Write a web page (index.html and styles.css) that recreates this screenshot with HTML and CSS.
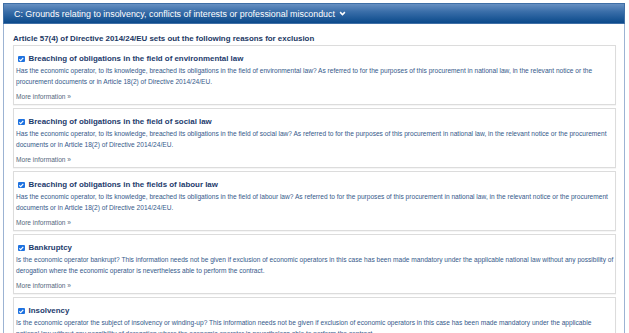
FILE: index.html
```html
<!DOCTYPE html>
<html lang="en">
<head>
  <meta charset="UTF-8" />
  <title>Exclusion grounds</title>
  <link rel="stylesheet" href="styles.css">
</head>
<body>
  <section class="panel">
    <div class="panel-head">
      C: Grounds relating to insolvency, conflicts of interests or professional misconduct
      <svg class="chev" viewBox="0 0 10 8" width="7" height="6"><path d="M0.8 2.2 L2.4 0.6 L5 3.2 L7.6 0.6 L9.2 2.2 L5 6.4 Z" fill="#fff"/></svg>
    </div>

    <div class="panel-body">
      <h3 class="intro">Article 57(4) of Directive 2014/24/EU sets out the following reasons for exclusion</h3>

      <!-- one card per ground -->
      <div class="ground">
        <div class="ground-title"><span class="check"><svg viewBox="0 0 8 8"><path d="M1.6 4.1 L3.3 5.8 L6.5 2.2" fill="none" stroke="#fff" stroke-width="1.4"/></svg></span>Breaching of obligations in the field of environmental law</div>
        <p class="ground-desc">Has the economic operator, to its knowledge, breached its obligations in the field of environmental law? As referred to for the purposes of this procurement in national law, in the relevant notice or the procurement documents or in Article 18(2) of Directive 2014/24/EU.</p>
        <a class="more" href="#">More information »</a>
      </div>

      <div class="ground">
        <div class="ground-title"><span class="check"><svg viewBox="0 0 8 8"><path d="M1.6 4.1 L3.3 5.8 L6.5 2.2" fill="none" stroke="#fff" stroke-width="1.4"/></svg></span>Breaching of obligations in the field of social law</div>
        <p class="ground-desc">Has the economic operator, to its knowledge, breached its obligations in the field of social law? As referred to for the purposes of this procurement in national law, in the relevant notice or the procurement documents or in Article 18(2) of Directive 2014/24/EU.</p>
        <a class="more" href="#">More information »</a>
      </div>

      <div class="ground">
        <div class="ground-title"><span class="check"><svg viewBox="0 0 8 8"><path d="M1.6 4.1 L3.3 5.8 L6.5 2.2" fill="none" stroke="#fff" stroke-width="1.4"/></svg></span>Breaching of obligations in the fields of labour law</div>
        <p class="ground-desc">Has the economic operator, to its knowledge, breached its obligations in the field of labour law? As referred to for the purposes of this procurement in national law, in the relevant notice or the procurement documents or in Article 18(2) of Directive 2014/24/EU.</p>
        <a class="more" href="#">More information »</a>
      </div>

      <div class="ground">
        <div class="ground-title"><span class="check"><svg viewBox="0 0 8 8"><path d="M1.6 4.1 L3.3 5.8 L6.5 2.2" fill="none" stroke="#fff" stroke-width="1.4"/></svg></span>Bankruptcy</div>
        <p class="ground-desc">Is the economic operator bankrupt? This information needs not be given if exclusion of economic operators in this case has been made mandatory under the applicable national law without any possibility of derogation where the economic operator is nevertheless able to perform the contract.</p>
        <a class="more" href="#">More information »</a>
      </div>

      <div class="ground">
        <div class="ground-title"><span class="check"><svg viewBox="0 0 8 8"><path d="M1.6 4.1 L3.3 5.8 L6.5 2.2" fill="none" stroke="#fff" stroke-width="1.4"/></svg></span>Insolvency</div>
        <p class="ground-desc">Is the economic operator the subject of insolvency or winding-up? This information needs not be given if exclusion of economic operators in this case has been made mandatory under the applicable national law without any possibility of derogation where the economic operator is nevertheless able to perform the contract.</p>
        <a class="more" href="#">More information »</a>
      </div>
    </div>
  </section>
</body>
</html>
```

FILE: styles.css
```css
/* BASE */
* { margin:0; padding:0; box-sizing:border-box; }
html, body { height:100%; overflow:hidden; background:#fff; }
body { font-family:"Liberation Sans", Arial, sans-serif; padding:3px 4px 0 3px; }
a { text-decoration:none; }

/* PANEL */
.panel {
  border:1px solid #9cb3d3; border-bottom:none;
  min-height:400px;
}
.panel-head {
  height:21px; margin:-1px -1px 0;
  display:flex; align-items:center; gap:4px;
  padding:0 10px;
  background:linear-gradient(#6690c2, #3a6ea9 40%, #0b4a8b);
  border:1px solid #3f6fa6;
  color:#fff; font-size:8.9px;
}
.chev { margin-top:1px; }

.panel-body { padding:9px 8px 0 9px; }
.intro {
  font-size:7.9px; font-weight:bold; color:#1b3763;
  line-height:12px;
}

/* GROUND CARDS */
.ground {
  border:1px solid #dcdcdc; background:#fff;
  padding:7px 0 1.5px 2px;
  margin-bottom:3px;
  box-shadow:0 1px 1px rgba(0,0,0,0.04);
}
.ground-title {
  display:flex; align-items:center; gap:4px;
  font-size:7.9px; font-weight:bold; color:#1d3b6c;
  line-height:12px; padding-left:2px;
}
.check {
  width:6.5px; height:6.5px; border-radius:1px;
  background:#1e72e0; display:inline-flex;
}
.check svg { width:6.5px; height:6.5px; }
.ground-desc {
  font-size:6.6px; line-height:11.3px; color:#35598a;
}
.more {
  display:block; margin-top:3.6px;
  font-size:6.6px; line-height:11.3px; color:#56687c;
}
```
